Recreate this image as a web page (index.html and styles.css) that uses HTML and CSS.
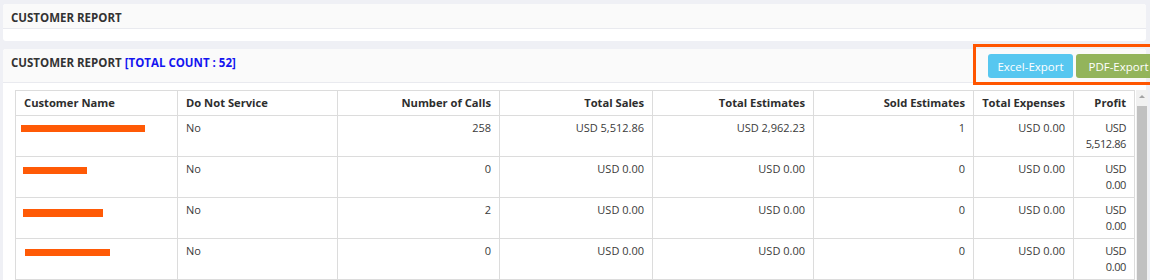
FILE: index.html
```html
<!DOCTYPE html>
<html>
<head>
<meta charset="utf-8">
<link rel="stylesheet" href="styles.css">
</head>
<body>
<div class="page">
  <section class="panel panel-top">
    <div class="panel-head"><h2 class="title">CUSTOMER REPORT</h2></div>
    <div class="panel-body-empty"></div>
  </section>

  <section class="panel panel-report">
    <div class="panel-head report-head">
      <h2 class="title">CUSTOMER REPORT <span class="count">[TOTAL COUNT : 52]</span></h2>
      <div class="actions">
        <button class="btn btn-excel">Excel-Export</button>
        <button class="btn btn-pdf">PDF-Export</button>
      </div>
    </div>
    <div class="highlight"></div>
    <div class="report-body">
      <div class="grid" role="table">
        <div class="th">Customer Name</div>
        <div class="th">Do Not Service</div>
        <div class="th r">Number of Calls</div>
        <div class="th r">Total Sales</div>
        <div class="th r">Total Estimates</div>
        <div class="th r">Sold Estimates</div>
        <div class="th r">Total Expenses</div>
        <div class="th r">Profit</div>

        <div class="td"><span class="redact redact-1"></span></div>
        <div class="td">No</div>
        <div class="td r">258</div>
        <div class="td r">USD 5,512.86</div>
        <div class="td r">USD 2,962.23</div>
        <div class="td r">1</div>
        <div class="td r">USD 0.00</div>
        <div class="td r last">USD 5,512.86</div>

        <div class="td"><span class="redact redact-2"></span></div>
        <div class="td">No</div>
        <div class="td r">0</div>
        <div class="td r">USD 0.00</div>
        <div class="td r">USD 0.00</div>
        <div class="td r">0</div>
        <div class="td r">USD 0.00</div>
        <div class="td r last">USD 0.00</div>

        <div class="td"><span class="redact redact-3"></span></div>
        <div class="td">No</div>
        <div class="td r">2</div>
        <div class="td r">USD 0.00</div>
        <div class="td r">USD 0.00</div>
        <div class="td r">0</div>
        <div class="td r">USD 0.00</div>
        <div class="td r last">USD 0.00</div>

        <div class="td"><span class="redact redact-4"></span></div>
        <div class="td">No</div>
        <div class="td r">0</div>
        <div class="td r">USD 0.00</div>
        <div class="td r">USD 0.00</div>
        <div class="td r">0</div>
        <div class="td r">USD 0.00</div>
        <div class="td r last">USD 0.00</div>
      </div>
      <div class="scrollbar">
        <div class="sb-arrow"></div>
        <div class="sb-thumb"></div>
      </div>
    </div>
  </section>
</div>
</body>
</html>
```

FILE: styles.css
```css
html, body {
  margin: 0;
  padding: 0;
  overflow: hidden;
}
body {
  background: #eff0f5;
  font-family: "Open Sans", "Liberation Sans", sans-serif;
  color: #333;
  width: 1150px;
  height: 280px;
}
.page {
  padding: 4px 0 0 3px;
}
.panel {
  width: 1143px;
  background: #fff;
  border-radius: 3px;
  position: relative;
}
.panel-top {
  margin-bottom: 8px;
}
.panel-head {
  background: #fafafa;
  border-bottom: 1px solid #e9eaef;
  padding: 6px 8px 1px 8px;
  height: 17px;
  border-radius: 3px 3px 0 0;
}
.panel-body-empty {
  height: 12px;
}
.title {
  margin: 0;
  font-size: 11.5px;
  line-height: 16px;
  font-weight: 700;
  color: #333;
}
.count {
  color: #1414f0;
}
.report-head {
  height: 28px;
  padding: 5px 0 0 8px;
  display: flex;
  justify-content: space-between;
  align-items: flex-start;
}
.report-head .title {
  padding-top: 1px;
}
.actions {
  display: flex;
  gap: 3px;
  margin-right: -15px;
}
.btn {
  border: none;
  border-radius: 3px;
  color: #fff;
  font-family: "Open Sans", "Liberation Sans", sans-serif;
  font-size: 11.5px;
  height: 24px;
  width: 85px;
  padding: 0;
}
.btn-excel {
  background: #57c7f0;
}
.btn-pdf {
  background: #93b45b;
}
.highlight {
  position: absolute;
  left: 970px;
  top: -5px;
  width: 180px;
  height: 41px;
  box-sizing: border-box;
  border: 3.5px solid #ff5500;
  border-right: none;
}
.report-body {
  display: flex;
  gap: 1px;
  padding: 7px 0 0 12px;
}
.grid {
  display: grid;
  grid-template-columns: 162px 160px 162px 153px 161px 160px 100px 61px;
  grid-template-rows: 25px;
  grid-auto-rows: 41px;
  border-left: 1px solid #dcdcdc;
  border-top: 1px solid #dcdcdc;
  font-size: 11px;
  line-height: 16px;
}
.th, .td {
  box-sizing: border-box;
  border-right: 1px solid #dcdcdc;
  border-bottom: 1px solid #dcdcdc;
  padding: 4px 8px;
}
.th {
  font-size: 11.2px;
  font-weight: 700;
  color: #2e2e2e;
  white-space: nowrap;
}
.td {
  color: #3a3a3a;
}
.td.last {
  padding-left: 6px;
  letter-spacing: -0.4px;
  word-spacing: 20px;
}
.r {
  text-align: right;
}
.redact {
  display: block;
  height: 7px;
  background: #ff5a06;
  margin-top: 5px;
}
.redact-1 { width: 124px; margin-left: -3px; }
.redact-2 { width: 64px; margin-left: -1px; margin-top: 6px; }
.redact-3 { width: 80px; margin-left: -1px; margin-top: 7px; height: 8px; }
.redact-4 { width: 85px; margin-left: 1px; margin-top: 6px; }
.scrollbar {
  width: 12px;
  flex: none;
  background: #f1f1f1;
  display: flex;
  flex-direction: column;
  align-items: center;
  height: 200px;
}
.sb-arrow {
  width: 0;
  height: 0;
  margin: 5px 0 8px;
  border-left: 3px solid transparent;
  border-right: 3px solid transparent;
  border-bottom: 3px solid #a3a3a3;
}
.sb-thumb {
  width: 10px;
  flex: 1;
  background: #c1c1c1;
}
```
